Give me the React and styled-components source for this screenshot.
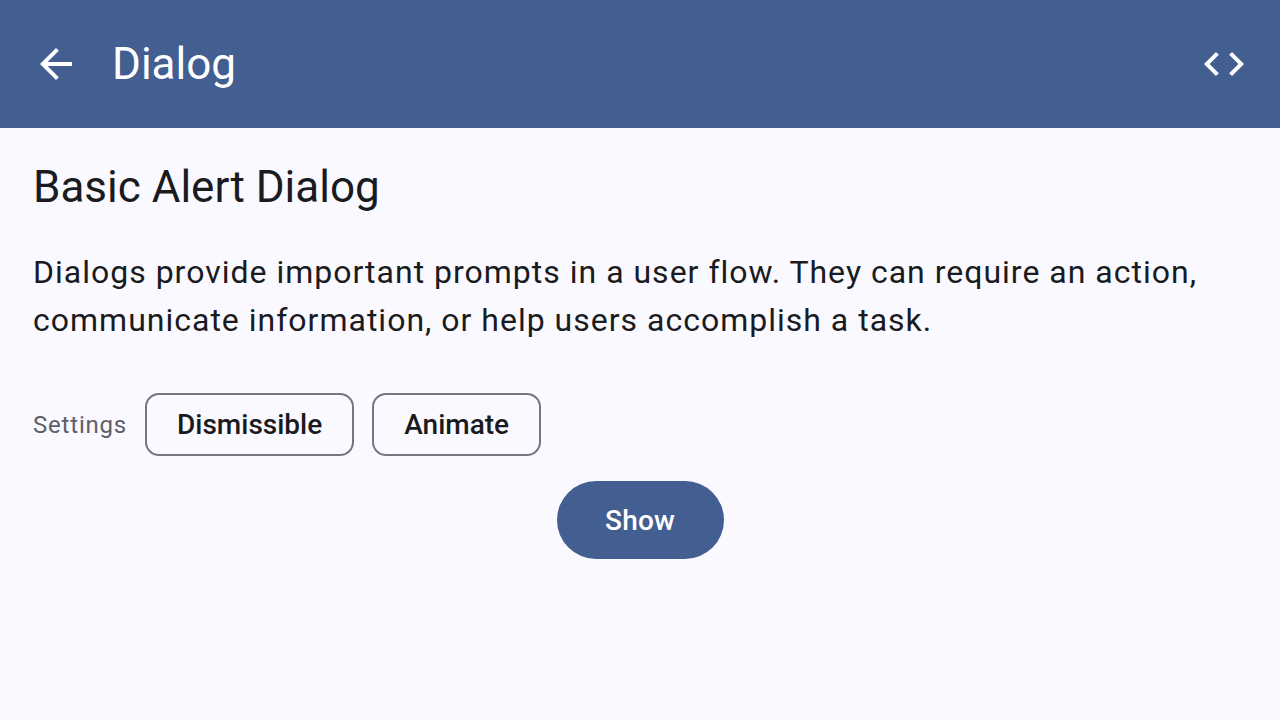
import React from "react";
import styled, { createGlobalStyle } from "styled-components";

const Global = createGlobalStyle`
  html, body { margin: 0; padding: 0; background: #f9f9ff; }
  body { font-family: Roboto, "Noto Sans", sans-serif; }
`;

const Page = styled.div`
  width: 1280px;
  height: 720px;
  background: #f9f9ff;
  display: flex;
  flex-direction: column;
`;

const TopBar = styled.header`
  height: 128px;
  background: #435e91;
  display: flex;
  align-items: center;
  padding: 0 32px;
  box-sizing: border-box;
  color: #ffffff;
`;

const IconButton = styled.div`
  width: 48px;
  height: 48px;
  display: flex;
  align-items: center;
  justify-content: center;
`;

const BarTitle = styled.h1`
  margin: 0 0 0 32px;
  font-size: 44px;
  font-weight: 400;
  flex: 1;
  letter-spacing: 0;
`;

const Content = styled.main`
  padding: 31px 33px;
  display: flex;
  flex-direction: column;
`;

const Heading = styled.h2`
  margin: 0;
  font-size: 44px;
  font-weight: 400;
  color: #1a1b20;
  line-height: 56px;
`;

const Body = styled.p`
  margin: 33px 0 0 0;
  font-size: 32px;
  line-height: 48px;
  letter-spacing: 1px;
  color: #1a1b20;
`;

const SettingsRow = styled.div`
  display: flex;
  align-items: center;
  gap: 18px;
  margin-top: 49px;
`;

const Label = styled.span`
  font-size: 24px;
  color: #5d6068;
  letter-spacing: 0.8px;
`;

const Chip = styled.button`
  height: 63px;
  padding: 0 ${(p) => p.$pad}px;
  border: 2px solid #74777f;
  border-radius: 14px;
  background: transparent;
  font-family: Roboto, sans-serif;
  font-size: 28px;
  font-weight: 500;
  color: #1a1b20;
  letter-spacing: 0;
`;

const ButtonRow = styled.div`
  display: flex;
  justify-content: center;
  margin-top: 25px;
`;

const Filled = styled.button`
  height: 78px;
  width: 167px;
  border: none;
  border-radius: 39px;
  background: #435e91;
  color: #ffffff;
  font-family: Roboto, sans-serif;
  font-size: 28px;
  font-weight: 500;
  letter-spacing: 0.2px;
`;

export default function App() {
  return (
    <Page>
      <Global />
      <TopBar>
        <IconButton>
          <svg width="48" height="48" viewBox="0 0 24 24" fill="#fff">
            <path d="M20 11H7.83l5.59-5.59L12 4l-8 8 8 8 1.41-1.41L7.83 13H20v-2z" />
          </svg>
        </IconButton>
        <BarTitle>Dialog</BarTitle>
        <IconButton>
          <svg width="48" height="48" viewBox="0 0 24 24" fill="#fff">
            <path d="M9.4 16.6L4.8 12l4.6-4.6L8 6l-6 6 6 6 1.4-1.4zm5.2 0l4.6-4.6-4.6-4.6L16 6l6 6-6 6-1.4-1.4z" />
          </svg>
        </IconButton>
      </TopBar>
      <Content>
        <Heading>Basic Alert Dialog</Heading>
        <Body>
          Dialogs provide important prompts in a user flow. They can require an action,
          <br />
          communicate information, or help users accomplish a task.
        </Body>
        <SettingsRow>
          <Label>Settings</Label>
          <Chip $pad={30}>Dismissible</Chip>
          <Chip $pad={30}>Animate</Chip>
        </SettingsRow>
        <ButtonRow>
          <Filled>Show</Filled>
        </ButtonRow>
      </Content>
    </Page>
  );
}
